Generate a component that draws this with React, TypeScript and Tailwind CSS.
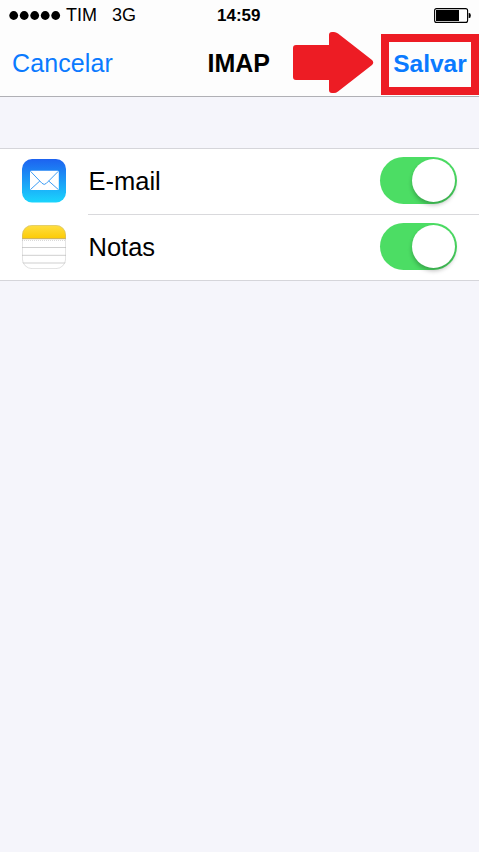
import React from "react";

interface Account {
  name: string;
  icon: React.ReactNode;
}

const MailIcon = () => (
  <svg className="block h-11 w-11" viewBox="0 0 44 44" fill="none">
    <defs>
      <linearGradient id="mail" x1="0" y1="0" x2="0" y2="1">
        <stop offset="0" stopColor="#1d62f0" />
        <stop offset="1" stopColor="#1ad5fd" />
      </linearGradient>
    </defs>
    <rect width="44" height="43.5" rx="10" fill="url(#mail)" />
    <rect x="8" y="11.8" width="28.8" height="19.2" rx="1" fill="#fff" />
    <path
      d="M8.5 12.3L20 24.3Q22.2 26.6 24.4 24.3L36.3 12.3M8.5 30.5L17.8 22M36.3 30.5L26.7 22"
      stroke="#3d9df5"
      strokeWidth="1"
    />
  </svg>
);

const NotesIcon = () => (
  <svg className="block h-11 w-11" viewBox="0 0 44 44" fill="none">
    <defs>
      <linearGradient id="notes" x1="0" y1="0" x2="0" y2="1">
        <stop offset="0" stopColor="#ffdf43" />
        <stop offset="1" stopColor="#fccb05" />
      </linearGradient>
      <clipPath id="notesClip">
        <rect width="44" height="44" rx="10" />
      </clipPath>
    </defs>
    <g clipPath="url(#notesClip)">
      <rect width="44" height="44" fill="#fff" />
      <rect width="44" height="13.5" fill="url(#notes)" />
      <path d="M0 13.7H44" stroke="#bfa14f" strokeWidth="0.9" />
      <path d="M0 15.5H44" stroke="#d0d0d0" strokeWidth="0.8" strokeDasharray="1 1" />
      <path d="M0 22.5H44M0 30.3H44M0 38H44" stroke="#cfcfcf" />
    </g>
    <rect x="0.4" y="0.4" width="43.2" height="43.2" rx="9.6" stroke="#b5b5b5" strokeOpacity="0.5" strokeWidth="0.8" />
  </svg>
);

const accounts: Account[] = [
  { name: "E-mail", icon: <MailIcon /> },
  { name: "Notas", icon: <NotesIcon /> },
];

// iOS style switch in the "on" position
const Toggle = () => (
  <div className="mb-[2px] flex h-[47px] w-[77px] items-center justify-end rounded-full bg-[#4cdd64] pr-[2.5px]">
    <div className="h-[42.5px] w-[42.5px] rounded-full bg-white shadow-[0_3px_4px_rgba(0,0,0,0.25)]" />
  </div>
);

const StatusBar = () => (
  <div className="flex h-[31px] items-center text-[18px] leading-[31px]">
    <div className="flex w-[217px] items-center pl-[9px]">
      <svg className="h-[9px] w-[52px]" viewBox="0 0 52 9">
        {[4.7, 15.2, 25.7, 36.2, 46.7].map((cx) => (
          <circle key={cx} cx={cx} cy="4.5" r="4.4" />
        ))}
      </svg>
      <span className="ml-[5px]">TIM</span>
      <span className="ml-[15px]">3G</span>
    </div>
    <span className="text-[17px] font-bold">14:59</span>
    <svg className="mr-[8px] ml-auto h-[15px] w-[37px]" viewBox="0 0 37 15">
      <rect x="0.6" y="0.6" width="33" height="13.8" rx="2" fill="#fff" stroke="#000" strokeWidth="1.1" />
      <rect x="2" y="2" width="23" height="11" />
      <path d="M34.7 5H35.3Q36.8 5 36.8 7.5Q36.8 10 35.3 10H34.7Z" />
    </svg>
  </div>
);

const App: React.FC = () => {
  return (
    <div className="min-h-screen w-full bg-[#f5f5fb] font-['Liberation_Sans',Arial,sans-serif] text-black">
      <header className="h-[97px] border-b border-[#b0b0b5] bg-[#fdfdfd]">
        <StatusBar />
        <div className="flex h-[65px] items-center text-[25px]">
          <span className="w-[196px] pl-[12px] tracking-[0.1px] text-[#0a7aff]">Cancelar</span>
          <h1 className="w-[97px] pl-[11.5px] font-bold">IMAP</h1>
          <svg className="mb-[3px] h-[62px] w-[81px]" viewBox="0 0 81 62">
            <path
              d="M3 14H36V4Q36 1 39 1H41Q43 1 45 2.5L79 29Q81.5 31.5 79 34L45 60.5Q43 62 41 62H39Q36 62 36 59V49H3Q0 49 0 46V17Q0 14 3 14Z"
              fill="#ed1c24"
            />
          </svg>
          <div className="mt-[2px] ml-[7px] flex h-[61px] w-[98px] items-center justify-center border-8 border-[#ed1c24] pb-[1px] text-[24.5px] font-bold text-[#0a7aff]">
            Salvar
          </div>
        </div>
      </header>

      {/* Account services */}
      <ul className="mt-[51px] border-y border-[#d5d5da] bg-white">
        {accounts.map((account, index) => (
          <li key={account.name} className="flex h-[65px] pl-[22px] first:h-[66px]">
            <div className="pt-[10px]">{account.icon}</div>
            <div
              className={
                index === 0
                  ? "ml-[22px] flex flex-1 items-center justify-between border-b border-[#d9d9dc] pr-[22px]"
                  : "ml-[22px] flex flex-1 items-center justify-between pr-[22px]"
              }
            >
              <span className="pl-[0.5px] text-[25.5px]">{account.name}</span>
              <Toggle />
            </div>
          </li>
        ))}
      </ul>
    </div>
  );
};

export default App;
